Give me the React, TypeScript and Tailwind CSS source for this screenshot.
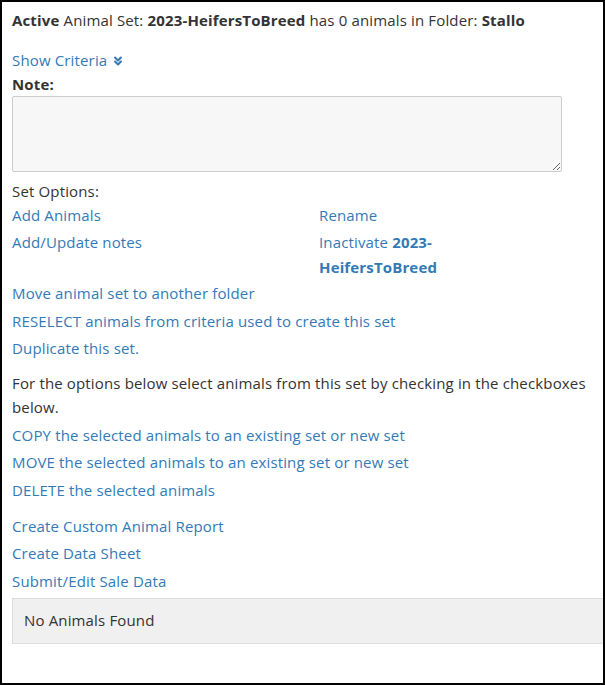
import { ChevronsDown } from "lucide-react";

const LINK = "text-[#337ab7]";

const Option = ({ children, className = "mb-[2.5px]" }: { children: React.ReactNode; className?: string }) => (
  <div className={`leading-[25px] ${className}`}>
    <a href="#" className={LINK}>
      {children}
    </a>
  </div>
);

export default function App() {
  return (
    <div
      className="w-[605px] h-[685px] border-2 border-black overflow-hidden bg-white text-[15px] tracking-[0.15px] text-[#333333] pl-[10px] pt-[6px]"
      style={{ fontFamily: '"Open Sans", "Liberation Sans", sans-serif' }}
    >
      <div className="leading-6 whitespace-nowrap">
        <b className="font-bold">Active</b> Animal Set: <b className="font-bold">2023-HeifersToBreed</b> has 0
        animals in Folder: <b className="font-bold">Stallo</b>
      </div>

      <div className="mt-[17px] leading-[23px]">
        <a href="#" className={`${LINK} inline-flex items-center gap-[4px]`}>
          Show Criteria
          <ChevronsDown size={14} strokeWidth={3.5} />
        </a>
      </div>
      <div className="font-bold leading-6">Note:</div>
      <textarea className="block w-[550px] h-[76px] bg-[#f7f7f7] border border-[#cccccc] rounded-[2px] outline-none" />

      <div className="mt-[8px] leading-[23px]">Set Options:</div>
      <div className="grid grid-cols-[307px_280px]">
        <div>
          <Option className="mb-[2px]">Add Animals</Option>
          <Option className="mb-[2px]">Add/Update notes</Option>
        </div>
        <div>
          <Option className="mb-[2px]">Rename</Option>
          <div className="leading-[25px] mb-[1px] w-[150px]">
            <a href="#" className={LINK}>
              Inactivate <b className="font-bold">2023-HeifersToBreed</b>
            </a>
          </div>
        </div>
      </div>
      <Option>Move animal set to another folder</Option>
      <Option>RESELECT animals from criteria used to create this set</Option>
      <Option>Duplicate this set.</Option>

      <p className="mt-[10px] leading-6 w-[590px]">
        For the options below select animals from this set by checking in the checkboxes below.
      </p>
      <div className="mt-[3.5px]">
        <Option>COPY the selected animals to an existing set or new set</Option>
        <Option>MOVE the selected animals to an existing set or new set</Option>
        <Option>DELETE the selected animals</Option>
      </div>

      <div className="mt-[11px]">
        <Option>Create Custom Animal Report</Option>
        <Option>Create Data Sheet</Option>
        <Option>Submit/Edit Sale Data</Option>
      </div>

      <div className="mt-[4px] w-[620px] h-[46px] bg-[#f0f0f0] border border-[#dddddd] flex items-center pl-[11px] text-[#333333]">
        No Animals Found
      </div>
    </div>
  );
}
